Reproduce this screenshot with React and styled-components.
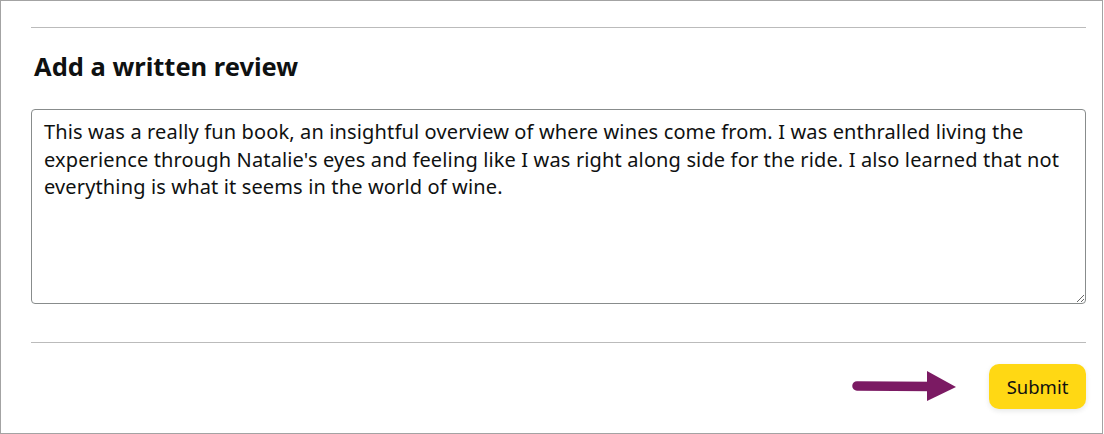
import React from "react";
import styled, { createGlobalStyle } from "styled-components";

const GlobalStyle = createGlobalStyle`
  html, body { margin: 0; padding: 0; background: #ffffff; }
  body { font-family: "Noto Sans", "Open Sans", Arial, sans-serif; color: #0f1111; }
`;

const Frame = styled.div`
  box-sizing: border-box;
  width: 1103px;
  height: 434px;
  border: 1px solid #a3a3a3;
  padding: 26px 16px 0 30px;
  display: flex;
  flex-direction: column;
`;

const Divider = styled.div`
  height: 1px;
  background: #bbbbbb;
  margin-top: ${(p) => p.$top || 0}px;
`;

const Heading = styled.h2`
  margin: 21px 0 0 3px;
  font-family: "Noto Sans", "Open Sans", Arial, sans-serif;
  font-size: 25.5px;
  line-height: 34px;
  font-weight: 700;
  color: #0f1111;
`;

const ReviewBox = styled.textarea`
  box-sizing: border-box;
  margin-top: 26px;
  width: 100%;
  height: 195px;
  border: 1px solid #888c8c;
  border-radius: 4px;
  padding: 8px 12px;
  font-family: "Noto Sans", "Open Sans", Arial, sans-serif;
  font-size: 20px;
  letter-spacing: 0.14px;
  line-height: 27.5px;
  color: #0f1111;
  resize: both;
  outline: none;
  white-space: pre-wrap;
`;

const Footer = styled.div`
  display: flex;
  justify-content: flex-end;
  align-items: center;
  gap: 31px;
  margin-top: 21px;
`;

const SubmitButton = styled.button`
  box-sizing: border-box;
  width: 97px;
  height: 45px;
  border: none;
  border-radius: 10px;
  background: #ffd814;
  box-shadow: 0 2px 5px rgba(213, 217, 217, 0.6);
  font-family: "Noto Sans", "Open Sans", Arial, sans-serif;
  font-size: 18.5px;
  color: #0f1111;
  cursor: pointer;
  padding: 0;
`;

const Arrow = () => (
  <svg width="106" height="32" viewBox="0 0 106 32" aria-hidden="true">
    <line x1="5" y1="15" x2="80" y2="15.5" stroke="#7b1a63" strokeWidth="9.5" strokeLinecap="round" />
    <polygon points="75,0 104,16 75,30" fill="#7b1a63" />
  </svg>
);

const reviewText =
  "This was a really fun book, an insightful overview of where wines come from. I was enthralled living the\nexperience through Natalie's eyes and feeling like I was right along side for the ride. I also learned that not\neverything is what it seems in the world of wine.";

export default function App() {
  return (
    <>
      <GlobalStyle />
      <Frame>
        <Divider />
        <Heading>Add a written review</Heading>
        <ReviewBox defaultValue={reviewText} />
        <Divider $top={38} />
        <Footer>
          <Arrow />
          <SubmitButton>Submit</SubmitButton>
        </Footer>
      </Frame>
    </>
  );
}
